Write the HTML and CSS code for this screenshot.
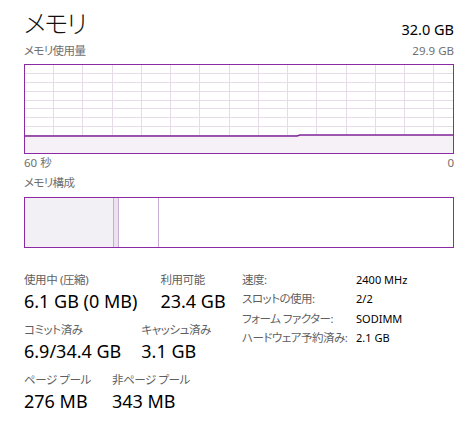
FILE: index.html
```html
<!DOCTYPE html>
<html lang="ja">
<head>
<meta charset="utf-8">
<link rel="stylesheet" href="styles.css">
</head>
<body>
<div class="page">
  <div class="head">
    <div class="title">メモリ</div>
    <div class="total">32.0 GB</div>
  </div>
  <div class="caption"><span class="jp">メモリ使用量</span><span>29.9 GB</span></div>
  <div class="graph">
    <svg class="graph-svg" width="428" height="88" viewBox="0 0 428 88">
      <g class="grid">
        <line x1="28.5" y1="0" x2="28.5" y2="88"/>
        <line x1="57.5" y1="0" x2="57.5" y2="88"/>
        <line x1="87.5" y1="0" x2="87.5" y2="88"/>
        <line x1="116.5" y1="0" x2="116.5" y2="88"/>
        <line x1="145.5" y1="0" x2="145.5" y2="88"/>
        <line x1="174.5" y1="0" x2="174.5" y2="88"/>
        <line x1="204.5" y1="0" x2="204.5" y2="88"/>
        <line x1="233.5" y1="0" x2="233.5" y2="88"/>
        <line x1="262.5" y1="0" x2="262.5" y2="88"/>
        <line x1="291.5" y1="0" x2="291.5" y2="88"/>
        <line x1="321.5" y1="0" x2="321.5" y2="88"/>
        <line x1="350.5" y1="0" x2="350.5" y2="88"/>
        <line x1="379.5" y1="0" x2="379.5" y2="88"/>
        <line x1="408.5" y1="0" x2="408.5" y2="88"/>
        <line x1="0" y1="8.5" x2="428" y2="8.5"/>
        <line x1="0" y1="17.5" x2="428" y2="17.5"/>
        <line x1="0" y1="26.5" x2="428" y2="26.5"/>
        <line x1="0" y1="35.5" x2="428" y2="35.5"/>
        <line x1="0" y1="43.5" x2="428" y2="43.5"/>
        <line x1="0" y1="52.5" x2="428" y2="52.5"/>
        <line x1="0" y1="61.5" x2="428" y2="61.5"/>
        <line x1="0" y1="70.5" x2="428" y2="70.5"/>
        <line x1="0" y1="79.5" x2="428" y2="79.5"/>
      </g>
      <polygon class="area" points="0,71 272,71 275,70 428,70 428,88 0,88"/>
      <polyline class="data" points="0,71 272,71 275,70 428,70"/>
    </svg>
  </div>
  <div class="caption axis"><span>60 秒</span><span>0</span></div>
  <div class="caption sub"><span class="jp">メモリ構成</span></div>
  <div class="comp">
    <div class="seg inuse" style="width:88px"></div>
    <div class="seg modified" style="width:6px"></div>
    <div class="seg standby" style="width:40px"></div>
    <div class="seg free"></div>
  </div>
  <div class="stats">
    <div class="groups">
      <div class="row r1">
        <div class="stat"><div class="lbl">使用中 (圧縮)</div><div class="val">6.1 GB (0 MB)</div></div>
        <div class="stat"><div class="lbl">利用可能</div><div class="val">23.4 GB</div></div>
      </div>
      <div class="row r2">
        <div class="stat"><div class="lbl">コミット済み</div><div class="val">6.9/34.4 GB</div></div>
        <div class="stat"><div class="lbl">キャッシュ済み</div><div class="val">3.1 GB</div></div>
      </div>
      <div class="row r3">
        <div class="stat"><div class="lbl">ページ プール</div><div class="val">276 MB</div></div>
        <div class="stat"><div class="lbl">非ページ プール</div><div class="val">343 MB</div></div>
      </div>
    </div>
    <div class="props">
      <div class="prop"><span class="pk">速度:</span><span class="pv">2400 MHz</span></div>
      <div class="prop"><span class="pk">スロットの使用:</span><span class="pv">2/2</span></div>
      <div class="prop"><span class="pk">フォーム ファクター:</span><span class="pv">SODIMM</span></div>
      <div class="prop"><span class="pk">ハードウェア予約済み:</span><span class="pv">2.1 GB</span></div>
    </div>
  </div>
</div>
</body>
</html>
```

FILE: styles.css
```css
html, body {
  margin: 0;
  padding: 0;
  background: #ffffff;
}
body {
  font-family: "Noto Sans", "Noto Sans CJK JP", sans-serif;
  font-feature-settings: "palt";
  color: #000;
}
.page {
  width: 430px;
  padding: 6px 19px 0 24px;
}
.head {
  display: flex;
  justify-content: space-between;
  align-items: flex-end;
}
.title {
  font-size: 25px;
  line-height: 34px;
  font-weight: 300;
  letter-spacing: -1.5px;
  color: #111;
}
.total {
  font-size: 14.5px;
  line-height: 20px;
  padding-bottom: 1px;
}
.caption {
  display: flex;
  justify-content: space-between;
  font-size: 11.5px;
  line-height: 16px;
  color: #707070;
  height: 16px;
  margin-top: 3px;
  margin-bottom: 5px;
}
.jp {
  letter-spacing: -0.6px;
}
.caption.axis {
  margin-top: 1px;
  margin-bottom: 0;
}
.caption.sub {
  margin-top: 4px;
  margin-bottom: 6px;
}
.graph {
  border: 1px solid #8b2aa4;
  height: 88px;
}
.graph-svg {
  display: block;
}
.grid line {
  stroke: #e6dbe9;
  stroke-width: 1;
}
.area {
  fill: #f6f0f7;
}
.data {
  fill: none;
  stroke: #7e2596;
  stroke-width: 1.6;
}
.comp {
  display: flex;
  border: 1px solid #8b2aa4;
  height: 49px;
}
.seg {
  box-sizing: border-box;
  height: 100%;
}
.inuse {
  background: #f3f0f5;
}
.modified {
  background: #ece2f0;
  border-left: 1px solid #c9abd4;
  border-right: 1px solid #c9abd4;
}
.standby {
  border-right: 1px solid #c9abd4;
}
.free {
  flex: 1;
}
.stats {
  display: flex;
  margin-top: 24px;
}
.groups {
  width: 218px;
}
.row {
  display: flex;
  gap: 23px;
  margin-bottom: 8px;
}
.r2 { gap: 20px; }
.r3 { gap: 21px; }
.lbl {
  font-size: 11.5px;
  line-height: 16px;
  letter-spacing: -0.4px;
  color: #5f5f5f;
}
.val {
  font-size: 18px;
  line-height: 26px;
}
.props {
  display: flex;
  flex-direction: column;
}
.prop {
  display: flex;
  height: 19.3px;
  line-height: 16px;
  white-space: nowrap;
}
.pk {
  width: 114px;
  font-size: 11.5px;
  letter-spacing: -0.5px;
  color: #5f5f5f;
}
.pv {
  font-size: 11px;
}
```
